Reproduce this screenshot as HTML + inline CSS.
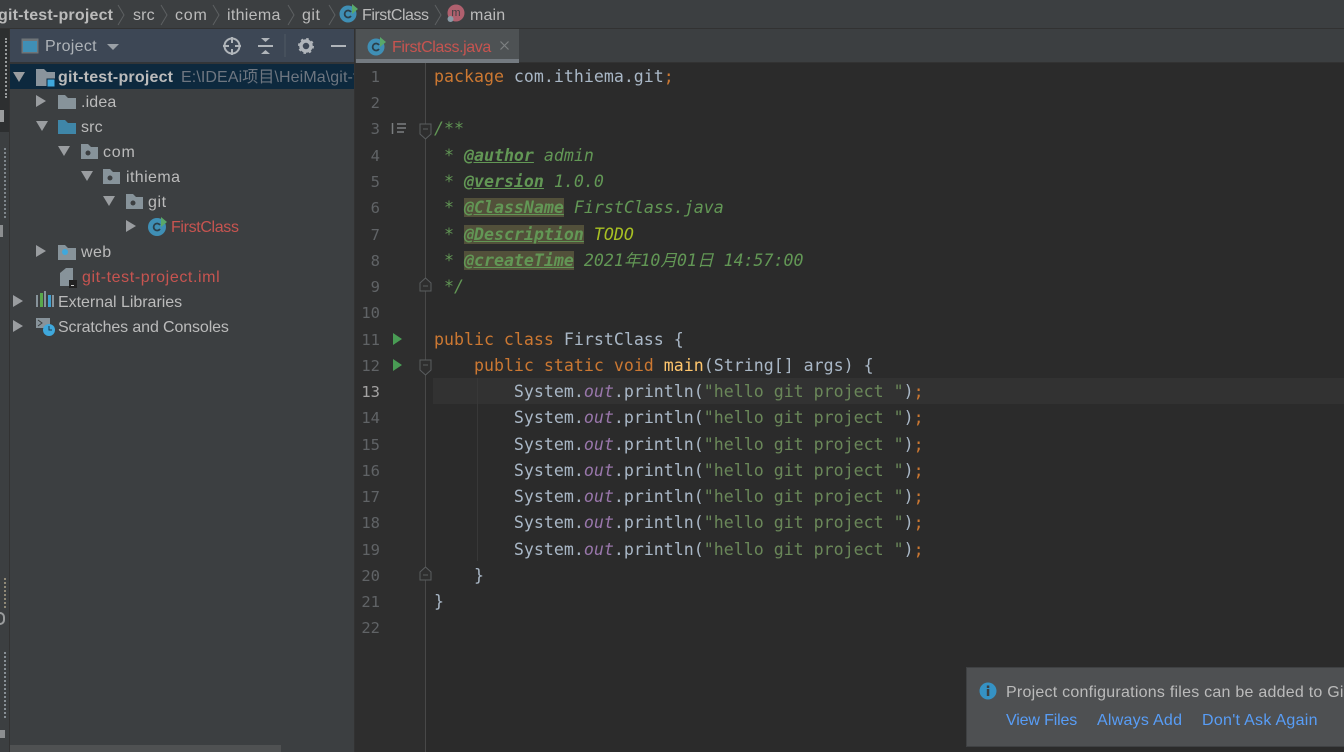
<!DOCTYPE html>
<html><head><meta charset="utf-8"><style>
html,body{margin:0;padding:0;background:#3c3f41}
#r{position:relative;width:1344px;height:752px;overflow:hidden;background:#3c3f41;font-family:"Liberation Sans","Noto Sans CJK SC",sans-serif;font-size:16px;color:#bbb}
#r div,#r svg{position:absolute}
.t{white-space:nowrap;line-height:20px;letter-spacing:.15px}
.c{white-space:pre;font-family:"DejaVu Sans Mono","Noto Sans CJK SC",monospace;font-size:16.6px;line-height:26px;color:#a9b7c6;left:434px}
.n{white-space:pre;font-family:"DejaVu Sans Mono",monospace;font-size:15.500px;line-height:26px;color:#606366;left:349px;width:31px;text-align:right}
.k{color:#cc7832}.g{color:#629755;font-style:italic}.tag{color:#629755;font-weight:bold;font-style:italic;text-decoration:underline}.s{color:#6a8759}.o{color:#9876aa;font-style:italic}.y{color:#ffc66d}
.hl{background:#52503a}
.red{color:#c75450}
</style></head><body><div id="r">
<!-- breadcrumb -->
<div style="left:0;top:0;width:1344px;height:28px;background:#3c3f41;border-bottom:1px solid #323232"></div>
<div class="t" style="left:-2px;top:6px;font-weight:bold;color:#bbb;letter-spacing:.2px">git-test-project</div>
<div class="t" style="left:133px;top:6px">src</div>
<div class="t" style="left:175px;top:6px;letter-spacing:.8px">com</div>
<div class="t" style="left:227px;top:6px;letter-spacing:.3px">ithiema</div>
<div class="t" style="left:302px;top:6px;letter-spacing:.5px">git</div>
<div class="t" style="left:362px;top:6px;letter-spacing:-.45px">FirstClass</div>
<div class="t" style="left:470px;top:6px">main</div>
<svg style="left:0;top:0" width="480" height="28" fill="none" stroke="#5d6062" stroke-width="1"><path d="M118 5l6 10-6 10M161 5l6 10-6 10M213 5l6 10-6 10M288 5l6 10-6 10M329 5l6 10-6 10M435 5l6 10-6 10"/></svg>
<svg style="left:339px;top:3px" width="20" height="20"><circle cx="9" cy="11" r="8.500" fill="#3f8fb5"/><path d="M12 9a3.500 3.500 0 1 0 0 4" fill="none" stroke="#2b3f4a" stroke-width="1.800"/><path d="M13 1l6 5-6 5z" fill="#59a869"/></svg>
<svg style="left:446px;top:3px" width="20" height="22"><circle cx="10" cy="10" r="8.500" fill="#b0606e"/><text x="10" y="13" font-size="11" text-anchor="middle" fill="#3c3f41" font-family="Liberation Sans">m</text><circle cx="4.500" cy="16" r="3" fill="#8a9aa5"/></svg>

<!-- left strip -->
<div style="left:0;top:29px;width:9px;height:723px;background:#3c3f41;border-right:1px solid #323232"></div>
<div style="left:0;top:29px;width:9px;height:103px;background:#2d2f30"></div>
<div style="left:1px;top:38px;width:4px;height:60px;border-right:2px dotted #b5b7b8;opacity:.8"></div>
<div style="left:0;top:110px;width:4px;height:12px;background:#9a9c9d"></div>
<div style="left:0;top:148px;width:4px;height:70px;border-right:2px dotted #9ba3ab;opacity:.7"></div>
<div style="left:0;top:225px;width:3px;height:12px;background:#8c8e90"></div>
<div style="left:0;top:578px;width:4px;height:30px;border-right:2px dotted #a69c85;opacity:.8"></div>
<div style="left:-6px;top:612px;width:7px;height:9px;border:2px solid #9a9c9d;border-radius:5px"></div>
<div style="left:0;top:652px;width:4px;height:66px;border-right:2px dotted #9ba3ab;opacity:.8"></div>
<div style="left:0;top:730px;width:5px;height:8px;background:#8c8e90"></div>

<!-- project pane -->
<div style="left:10px;top:29px;width:344px;height:33px;background:#3d4755;border-bottom:2px solid #323538"></div>
<div style="left:354px;top:29px;width:1px;height:723px;background:#323232"></div>
<svg style="left:21px;top:38px" width="18" height="18"><rect x=".5" y=".5" width="17" height="15" fill="#6e7478"/><rect x="2" y="3" width="14" height="11" fill="#3f8fb5"/></svg>
<div class="t" style="left:45px;top:37px;color:#aeb3b8;letter-spacing:.3px">Project</div>
<svg style="left:0;top:29px" width="354" height="33"><path d="M107 15h12l-6 6z" fill="#9aa0a6"/>
<g fill="none" stroke="#b0b5ba" stroke-width="2"><circle cx="232" cy="17" r="7.500"/><path d="M232 8v6M232 20v6M223 17h6M235 17h6"/></g>
<g stroke="#b0b5ba" stroke-width="2" fill="#b0b5ba"><path d="M258 17h15" /><path d="M261 9h9l-4.500 4z" stroke="none"/><path d="M261 25h9l-4.500-4z" stroke="none"/></g>
<path d="M285 5v23" stroke="#4e5862"/>
<circle cx="306" cy="17" r="5" fill="none" stroke="#b0b5ba" stroke-width="3.500"/><circle cx="306" cy="17" r="7" fill="none" stroke="#b0b5ba" stroke-width="2" stroke-dasharray="2.500 3"/>
<path d="M331 17h15" stroke="#b0b5ba" stroke-width="2"/></svg>

<!-- selected row -->
<div style="left:10px;top:64px;width:344px;height:25px;background:#0d293e"></div>
<svg style="left:0;top:64px" width="354" height="275">
<g fill="#9a9da0">
<path d="M13 8h12l-6 10z"/>
<path d="M36 31v12l10-6z"/>
<path d="M36 57h12l-6 10z"/>
<path d="M58 82h12l-6 10z"/>
<path d="M81 107h12l-6 10z"/>
<path d="M103 132h12l-6 10z"/>
<path d="M126 156v12l10-6z"/>
<path d="M36 181v12l10-6z"/>
<path d="M13 231v12l10-6z"/>
<path d="M13 256v12l10-6z"/>
</g>
<!-- folders -->
<path d="M36 5h8l3 3h8v14h-19z" fill="#8a949c"/><rect x="47" y="15" width="8" height="8" fill="#3fa8dc" stroke="#0d293e"/>
<path d="M58 31h7l3 3h8v11h-18z" fill="#87939a"/>
<path d="M58 56h7l3 3h8v11h-18z" fill="#3f86a8"/>
<g fill="#87939a"><path d="M81 80h7l3 3h7v12h-17z"/><path d="M103 105h7l3 3h7v12h-17z"/><path d="M126 130h7l3 3h7v12h-17z"/><path d="M58 181h7l3 3h8v12h-18z"/></g>
<g fill="#3c3f41"><circle cx="88" cy="89" r="2.500"/><circle cx="110" cy="114" r="2.500"/><circle cx="133" cy="139" r="2.500"/></g>
<circle cx="65" cy="188" r="3" fill="#3fa8dc"/>
<circle cx="157" cy="163" r="9" fill="#3f8fb5"/><path d="M160 161a3.500 3.500 0 1 0 0 4" fill="none" stroke="#2b3f4a" stroke-width="1.800"/><path d="M161 153l6 5-6 5z" fill="#59a869"/>
<path d="M60 209l6-5h7v18h-13z" fill="#87939a"/><rect x="69" y="216" width="8" height="8" fill="#222"/><rect x="71" y="221" width="3" height="1" fill="#ccc"/>
<g><rect x="36" y="231" width="2" height="12" fill="#87939a"/><rect x="40" y="229" width="3" height="14" fill="#59a84b"/><rect x="44" y="227" width="2" height="16" fill="#87939a"/><rect x="48" y="231" width="3" height="12" fill="#3f9fcf"/><rect x="52" y="231" width="2" height="12" fill="#87939a"/></g>
<path d="M36 254h14v10h-14z" fill="#87939a"/><path d="M38 256l4 3-4 3" fill="none" stroke="#3c3f41"/><circle cx="49" cy="266" r="6" fill="#3fa8dc"/><path d="M49 262v4h3" stroke="#1e3a4a" fill="none"/>
</svg>
<div class="t" style="left:58px;top:68px;font-weight:bold;color:#bbb;letter-spacing:.2px">git-test-project</div>
<div class="t" style="left:181px;top:68px;width:173px;overflow:hidden;color:#6e7680;font-size:16px;letter-spacing:.1px">E:\IDEAi项目\HeiMa\git-test-project</div>
<div class="t" style="left:81px;top:93px">.idea</div>
<div class="t" style="left:81px;top:118px">src</div>
<div class="t" style="left:103px;top:143px;letter-spacing:.8px">com</div>
<div class="t" style="left:126px;top:168px;letter-spacing:.4px">ithiema</div>
<div class="t" style="left:148px;top:193px;letter-spacing:.6px">git</div>
<div class="t red" style="left:171px;top:218px;letter-spacing:-.35px">FirstClass</div>
<div class="t" style="left:81px;top:243px;letter-spacing:.4px">web</div>
<div class="t red" style="left:82px;top:268px;letter-spacing:.6px">git-test-project.iml</div>
<div class="t" style="left:58px;top:293px;letter-spacing:-.02px">External Libraries</div>
<div class="t" style="left:58px;top:318px;letter-spacing:-.12px">Scratches and Consoles</div>
<div style="left:10px;top:745px;width:271px;height:7px;background:#4f5152"></div>

<!-- tabs -->
<div style="left:358px;top:29px;width:986px;height:33px;background:#3c3f41;border-bottom:1px solid #323232"></div>
<div style="left:356px;top:29px;width:163px;height:30px;background:#4e5254"></div>
<div style="left:356px;top:59px;width:163px;height:4px;background:#747a80"></div>
<svg style="left:367px;top:37px" width="20" height="20"><circle cx="9" cy="10" r="8.500" fill="#3f8fb5"/><path d="M12 8a3.500 3.500 0 1 0 0 4" fill="none" stroke="#2b3f4a" stroke-width="1.800"/><path d="M13 0l6 5-6 5z" fill="#59a869"/></svg>
<div class="t red" style="left:392px;top:38px;letter-spacing:-.4px">FirstClass.java</div>
<svg style="left:499px;top:40px" width="12" height="12"><path d="M1.500 1.500l8 8M9.500 1.500l-8 8" stroke="#7d8082" stroke-width="1.200"/></svg>

<!-- editor -->
<div style="left:355px;top:63px;width:989px;height:689px;background:#2b2b2b"></div>
<div style="left:355px;top:63px;width:70px;height:689px;background:#2e2e2e"></div>
<div style="left:425px;top:63px;width:1px;height:689px;background:#484848"></div>
<div style="left:433px;top:378px;width:911px;height:26px;background:#323232"></div>
<div style="left:477px;top:378px;width:1px;height:183px;background:#383838"></div>

<div class="n" style="top:64px">1</div><div class="n" style="top:90px">2</div><div class="n" style="top:116px">3</div><div class="n" style="top:143px">4</div><div class="n" style="top:169px">5</div><div class="n" style="top:195px">6</div><div class="n" style="top:222px">7</div><div class="n" style="top:248px">8</div><div class="n" style="top:274px">9</div><div class="n" style="top:300px">10</div><div class="n" style="top:327px">11</div><div class="n" style="top:353px">12</div><div class="n" style="top:379px;color:#a4a3a3">13</div><div class="n" style="top:405px">14</div><div class="n" style="top:432px">15</div><div class="n" style="top:458px">16</div><div class="n" style="top:484px">17</div><div class="n" style="top:510px">18</div><div class="n" style="top:537px">19</div><div class="n" style="top:563px">20</div><div class="n" style="top:589px">21</div><div class="n" style="top:615px">22</div>

<svg style="left:355px;top:63px" width="85" height="560" fill="none" stroke="#5a5d5f">
<path d="M37.500 60v11M42 61h9M42 65h9M42 69h7" stroke="#7b7e80" stroke-width="1.500"/>
<path d="M65 61h11v10l-5.500 5-5.500-5z" fill="#2e2e2e"/><path d="M68 66h5"/>
<path d="M65 228h11v-8l-5.500-5-5.500 5z" fill="#2e2e2e"/><path d="M68 223h5"/>
<path d="M65 297h11v10l-5.500 5-5.500-5z" fill="#2e2e2e"/><path d="M68 302h5"/>
<path d="M65 517h11v-8l-5.500-5-5.500 5z" fill="#2e2e2e"/><path d="M68 512h5"/>
<path d="M38 270v12l9-6z M38 296v12l9-6z" fill="#499c54" stroke="none"/>
</svg>

<div class="c" style="top:64px"><span class="k">package</span> com.ithiema.git<span class="k">;</span></div>
<div class="c g" style="top:116px">/**</div>
<div class="c g" style="top:143px"> * <span class="tag">@author</span> admin</div>
<div class="c g" style="top:169px"> * <span class="tag">@version</span> 1.0.0</div>
<div class="c g" style="top:195px"> * <span class="tag hl">@ClassName</span> FirstClass.java</div>
<div class="c g" style="top:222px"> * <span class="tag hl">@Description</span> <span style="color:#a8c023;font-weight:normal">TODO</span></div>
<div class="c g" style="top:248px"> * <span class="tag hl">@createTime</span> 2021年10月01日 14:57:00</div>
<div class="c g" style="top:274px"> */</div>
<div class="c" style="top:327px"><span class="k">public class</span> FirstClass {</div>
<div class="c" style="top:353px">    <span class="k">public static void</span> <span class="y">main</span>(String[] args) {</div>
<div class="c" style="top:379px">        System.<span class="o">out</span>.println(<span class="s">"hello git project "</span>)<span class="k">;</span></div>
<div class="c" style="top:405px">        System.<span class="o">out</span>.println(<span class="s">"hello git project "</span>)<span class="k">;</span></div>
<div class="c" style="top:432px">        System.<span class="o">out</span>.println(<span class="s">"hello git project "</span>)<span class="k">;</span></div>
<div class="c" style="top:458px">        System.<span class="o">out</span>.println(<span class="s">"hello git project "</span>)<span class="k">;</span></div>
<div class="c" style="top:484px">        System.<span class="o">out</span>.println(<span class="s">"hello git project "</span>)<span class="k">;</span></div>
<div class="c" style="top:510px">        System.<span class="o">out</span>.println(<span class="s">"hello git project "</span>)<span class="k">;</span></div>
<div class="c" style="top:537px">        System.<span class="o">out</span>.println(<span class="s">"hello git project "</span>)<span class="k">;</span></div>
<div class="c" style="top:563px">    }</div>
<div class="c" style="top:589px">}</div>

<!-- notification -->
<div style="left:966px;top:667px;width:378px;height:80px;background:#4e5052;border:1px solid #3f4143;border-right:0;box-sizing:border-box"></div>
<svg style="left:979px;top:682px" width="18" height="18"><circle cx="9" cy="9" r="8.500" fill="#3592c4"/><rect x="7.800" y="3.500" width="2.500" height="2.500" fill="#3c3f41"/><rect x="7.800" y="7" width="2.500" height="7" fill="#3c3f41"/></svg>
<div class="t" style="left:1006px;top:683px;color:#bbb;letter-spacing:.24px">Project configurations files can be added to Git</div>
<div class="t" style="left:1006px;top:711px;color:#589df6;letter-spacing:-.15px">View Files</div>
<div class="t" style="left:1097px;top:711px;color:#589df6;letter-spacing:.25px">Always Add</div>
<div class="t" style="left:1202px;top:711px;color:#589df6;letter-spacing:.28px">Don't Ask Again</div>
</div></body></html>
